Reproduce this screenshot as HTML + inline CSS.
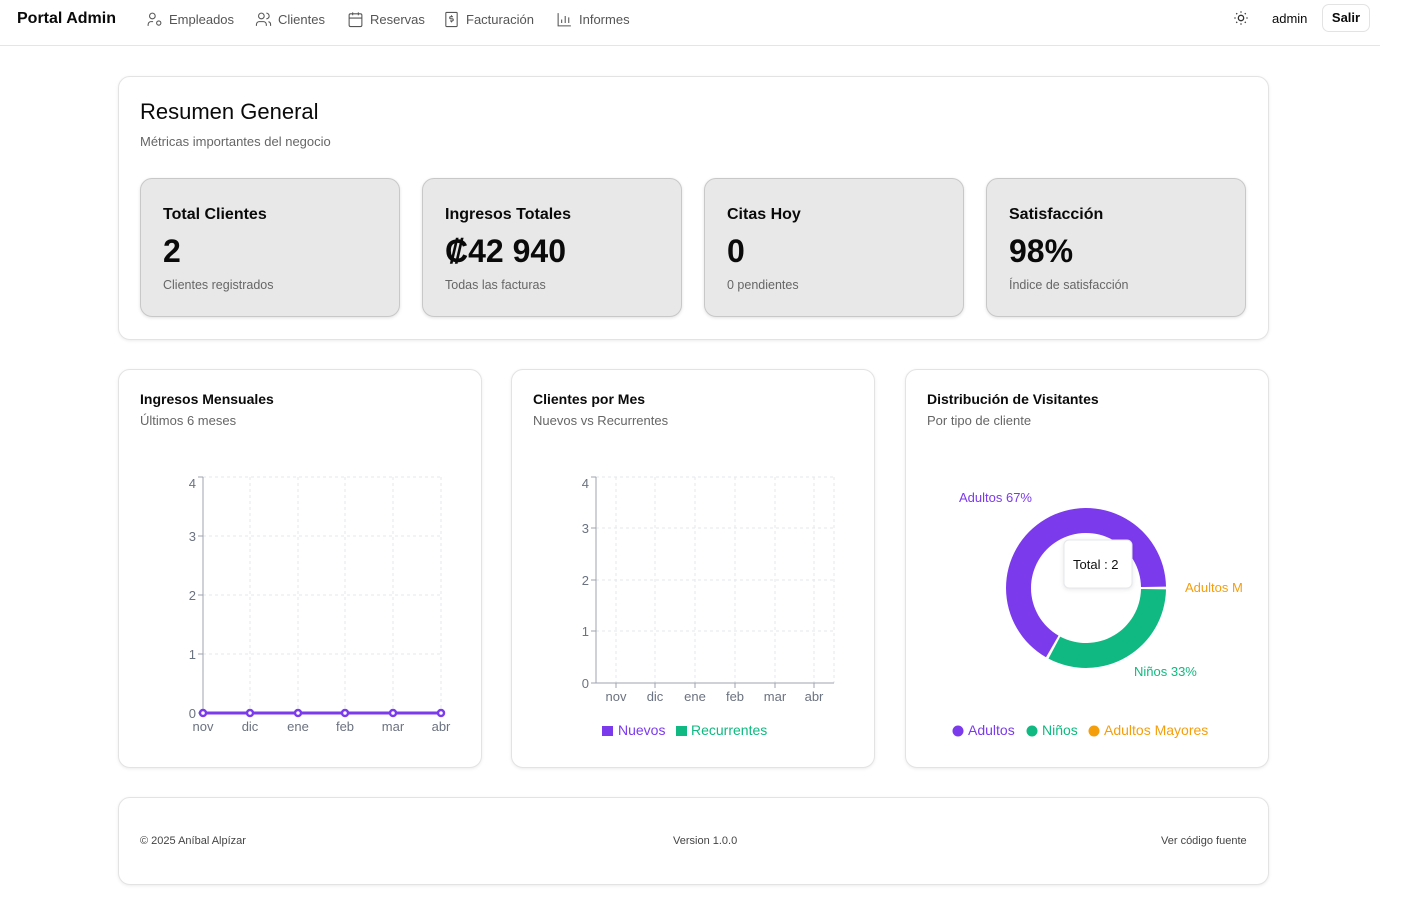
<!DOCTYPE html>
<html><head><meta charset="utf-8"><style>
*{box-sizing:border-box;margin:0;padding:0}
body{width:1410px;height:906px;background:#fff;font-family:"Liberation Sans",sans-serif;color:#0a0a0a;position:relative;overflow:hidden}
.abs{position:absolute}
.hdr{left:0;top:0;width:1380px;height:46px;border-bottom:1px solid #e5e5e5}
.nav{top:11px;font-size:13px;color:#555;display:flex;align-items:center;gap:6px}
.nav svg{width:17px;height:17px;stroke:#555;fill:none;stroke-width:1.5}
.card{border:1px solid #e3e3e3;border-radius:12px;box-shadow:0 1px 3px rgba(0,0,0,.08);background:#fff}
.stat{top:178px;width:260px;height:139px;background:#e8e8e8;border:1px solid #c8c8c8;border-radius:12px;box-shadow:0 1px 3px rgba(0,0,0,.12)}
.stat .t{position:absolute;left:22px;top:27px;font-size:16px;font-weight:600}
.stat .v{position:absolute;left:22px;top:54px;font-size:32px;font-weight:700}
.stat .s{position:absolute;left:22px;top:99px;font-size:12.5px;color:#666}
.ct{font-size:14px;font-weight:700}
.cs{font-size:13px;color:#666}
svg text{font-family:"Liberation Sans",sans-serif}
</style></head><body>
<div class="abs hdr"></div>
<div class="abs" style="left:17px;top:10px;font-size:16px;font-weight:700">Portal Admin</div>
<div class="abs nav" style="left:146px"><svg viewBox="0 0 24 24"><circle cx="9" cy="7" r="4"/><path d="M3 21v-2a4 4 0 0 1 4-4h3"/><circle cx="18" cy="17" r="3"/></svg>Empleados</div>
<div class="abs nav" style="left:255px"><svg viewBox="0 0 24 24"><circle cx="9" cy="7" r="4"/><path d="M2 21v-2a4 4 0 0 1 4-4h6a4 4 0 0 1 4 4v2M16 3a4 4 0 0 1 0 8M22 21v-2a4 4 0 0 0-3-3.9"/></svg>Clientes</div>
<div class="abs nav" style="left:347px"><svg viewBox="0 0 24 24"><rect x="3" y="4" width="18" height="18" rx="2"/><path d="M16 2v4M8 2v4M3 10h18"/></svg>Reservas</div>
<div class="abs nav" style="left:443px"><svg viewBox="0 0 24 24"><rect x="4" y="2" width="16" height="20" rx="1"/><path d="M14 8h-3a1.5 1.5 0 0 0 0 3h2a1.5 1.5 0 0 1 0 3h-3M12 6v2M12 14v2"/></svg>Facturación</div>
<div class="abs nav" style="left:556px"><svg viewBox="0 0 24 24"><path d="M3 3v18h18M8 17v-5M13 17V7M18 17v-8"/></svg>Informes</div>
<div class="abs" style="left:1233px;top:10px"><svg width="16" height="16" viewBox="0 0 24 24" fill="none" stroke="#333" stroke-width="2"><circle cx="12" cy="12" r="4"/><path d="M12 2v2M12 20v2M4.9 4.9l1.4 1.4M17.7 17.7l1.4 1.4M2 12h2M20 12h2M4.9 19.1l1.4-1.4M17.7 6.3l1.4-1.4"/></svg></div>
<div class="abs" style="left:1272px;top:11px;font-size:13px">admin</div>
<div class="abs" style="left:1322px;top:4px;width:48px;height:28px;border:1px solid #e3e3e3;border-radius:7px;font-size:13px;font-weight:600;text-align:center;line-height:26px">Salir</div>

<div class="abs card" style="left:118px;top:76px;width:1151px;height:264px"></div>
<div class="abs" style="left:140px;top:99px;font-size:22px;font-weight:500">Resumen General</div>
<div class="abs cs" style="left:140px;top:134px">Métricas importantes del negocio</div>
<div class="abs stat" style="left:140px"><div class="t">Total Clientes</div><div class="v">2</div><div class="s">Clientes registrados</div></div>
<div class="abs stat" style="left:422px"><div class="t">Ingresos Totales</div><div class="v">₡42 940</div><div class="s">Todas las facturas</div></div>
<div class="abs stat" style="left:704px"><div class="t">Citas Hoy</div><div class="v">0</div><div class="s">0 pendientes</div></div>
<div class="abs stat" style="left:986px"><div class="t">Satisfacción</div><div class="v">98%</div><div class="s">Índice de satisfacción</div></div>

<div class="abs card" style="left:118px;top:369px;width:364px;height:399px"></div>
<div class="abs ct" style="left:140px;top:391px">Ingresos Mensuales</div>
<div class="abs cs" style="left:140px;top:413px">Últimos 6 meses</div>
<div class="abs card" style="left:511px;top:369px;width:364px;height:399px"></div>
<div class="abs ct" style="left:533px;top:391px">Clientes por Mes</div>
<div class="abs cs" style="left:533px;top:413px">Nuevos vs Recurrentes</div>
<div class="abs card" style="left:905px;top:369px;width:364px;height:399px"></div>
<div class="abs ct" style="left:927px;top:391px">Distribución de Visitantes</div>
<div class="abs cs" style="left:927px;top:413px">Por tipo de cliente</div>

<svg class="abs" style="left:0;top:0" width="1410" height="906" font-size="13">
<g stroke="#e5e7eb" stroke-dasharray="3 3" fill="none">
<path d="M203 477H441M203 536H441M203 595H441M203 654H441M250 477V713M298 477V713M345 477V713M393 477V713M441 477V713"/>
<path d="M596 477H834M596 528H834M596 580H834M596 631H834M616 477V683M655 477V683M695 477V683M735 477V683M775 477V683M814 477V683M834 477V683"/>
</g>
<g stroke="#9ca3af" fill="none"><path d="M203 477V713M198 477h5M198 536h5M198 595h5M198 654h5M198 713h5"/>
<path d="M596 477V683H834M591 477h5M591 528h5M591 580h5M591 631h5M591 683h5M616 683v5M655 683v5M695 683v5M735 683v5M775 683v5M814 683v5"/></g>
<g fill="#6b7280" text-anchor="end"><text x="196" y="488">4</text><text x="196" y="541">3</text><text x="196" y="600">2</text><text x="196" y="659">1</text><text x="196" y="718">0</text>
<text x="589" y="488">4</text><text x="589" y="533">3</text><text x="589" y="585">2</text><text x="589" y="636">1</text><text x="589" y="688">0</text></g>
<g fill="#6b7280" text-anchor="middle"><text x="203" y="731">nov</text><text x="250" y="731">dic</text><text x="298" y="731">ene</text><text x="345" y="731">feb</text><text x="393" y="731">mar</text><text x="441" y="731">abr</text>
<text x="616" y="701">nov</text><text x="655" y="701">dic</text><text x="695" y="701">ene</text><text x="735" y="701">feb</text><text x="775" y="701">mar</text><text x="814" y="701">abr</text></g>
<path d="M203 713H441" stroke="#7c3aed" stroke-width="3"/>
<g fill="#fff" stroke="#7c3aed" stroke-width="2.5"><circle cx="203" cy="713" r="3"/><circle cx="250" cy="713" r="3"/><circle cx="298" cy="713" r="3"/><circle cx="345" cy="713" r="3"/><circle cx="393" cy="713" r="3"/><circle cx="441" cy="713" r="3"/></g>
<rect x="602" y="726" width="11" height="10" fill="#7c3aed"/><text x="618" y="735" fill="#7c3aed" font-size="14">Nuevos</text>
<rect x="676" y="726" width="11" height="10" fill="#10b981"/><text x="691" y="735" fill="#10b981" font-size="14">Recurrentes</text>
<path d="M1166 586.6A80 80 0 1 0 1046 657.3L1058.5 635.6A55 55 0 1 1 1141 587Z" fill="#7c3aed"/>
<path d="M1048.5 658.6A80 80 0 0 0 1166 589.4L1141 589A55 55 0 0 1 1060.2 636.6Z" fill="#10b981"/>
<text x="959" y="502" fill="#7c3aed">Adultos 67%</text>
<text x="1185" y="592" fill="#f59e0b">Adultos M</text>
<text x="1134" y="676" fill="#10b981">Niños 33%</text>
<rect x="1064" y="540" width="68" height="48" rx="5" fill="#fff" stroke="#e5e7eb" style="filter:drop-shadow(0 1px 2px rgba(0,0,0,.1))"/>
<text x="1073" y="569" fill="#111">Total : 2</text>
<g font-size="14"><circle cx="958" cy="731" r="5.5" fill="#7c3aed"/><text x="968" y="735" fill="#7c3aed">Adultos</text>
<circle cx="1032" cy="731" r="5.5" fill="#10b981"/><text x="1042" y="735" fill="#10b981">Niños</text>
<circle cx="1094" cy="731" r="5.5" fill="#f59e0b"/><text x="1104" y="735" fill="#f59e0b">Adultos Mayores</text></g>
</svg>

<div class="abs card" style="left:118px;top:797px;width:1151px;height:88px"></div>
<div class="abs" style="left:140px;top:835px;font-size:11px;color:#444">© 2025 Aníbal Alpízar</div>
<div class="abs" style="left:673px;top:835px;font-size:11px;color:#444">Version 1.0.0</div>
<div class="abs" style="left:1161px;top:835px;font-size:11px;color:#444">Ver código fuente</div>
</body></html>
